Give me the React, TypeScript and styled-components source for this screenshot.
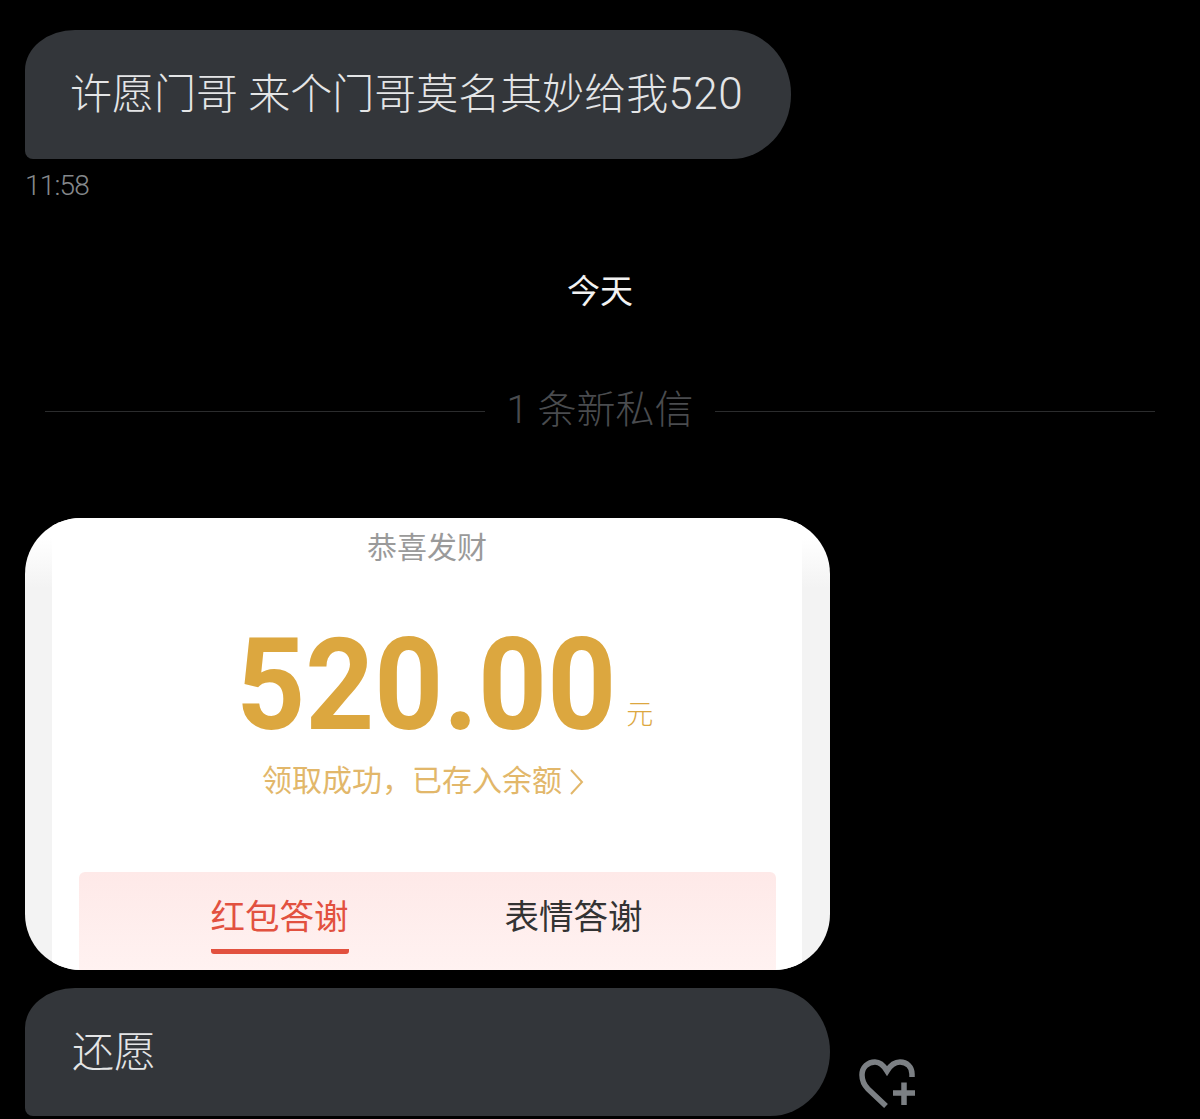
import styled, { createGlobalStyle } from 'styled-components';

const GlobalStyle = createGlobalStyle`
    html, body {
        margin: 0;
        padding: 0;
        background-color: #000;
    }
    body {
        font-family: Roboto, "Noto Sans CJK SC", sans-serif;
    }
`;

const Page = styled.div`
    width: 1200px;
    height: 1119px;
    box-sizing: border-box;
    padding: 30px 0 0 25px;
    overflow: hidden;
    background-color: #000;
`;

const Bubble = styled.div<{ $width: number; $height: number; $inset: number }>`
    width: ${(p) => p.$width}px;
    height: ${(p) => p.$height}px;
    box-sizing: border-box;
    padding: 0 ${(p) => p.$inset}px 8px;
    display: flex;
    align-items: center;
    background-color: #33363a;
    border-radius: 50px 60px 60px 8px / 40px 64px 64px 8px;
    color: #e4e5e6;
    font-size: 42px;
    font-weight: 300;
    white-space: pre;
`;

const Digits = styled.span`
    font-size: 44px;
    letter-spacing: 0.6px;
`;

const Time = styled.div`
    margin-top: 11px;
    height: 32px;
    line-height: 32px;
    font-size: 28px;
    font-weight: 300;
    letter-spacing: -0.8px;
    color: #85888b;
`;

const DateLabel = styled.div`
    margin: 70px 0 0 -25px;
    height: 40px;
    line-height: 40px;
    text-align: center;
    font-size: 33px;
    color: #f2f2f2;
`;

const Divider = styled.div`
    margin: 69px 0 0 20px;
    width: 1110px;
    height: 50px;
    display: flex;
    align-items: center;
    gap: 21px;
    color: #4a4c4f;
    font-size: 39px;
    font-weight: 300;
`;

const DividerLine = styled.div`
    flex: 1;
    height: 1px;
    margin-top: 10px;
    background-color: #2b2c2d;
`;

const ImageCard = styled.div`
    margin-top: 87px;
    width: 805px;
    height: 452px;
    box-sizing: border-box;
    padding: 0 28px 0 27px;
    background: linear-gradient(180deg, #fff 0, #fff 20px, #f3f3f3 70px);
    border-radius: 56px;
    overflow: hidden;
`;

const Receipt = styled.div`
    height: 100%;
    box-sizing: border-box;
    padding-top: 8px;
    display: flex;
    flex-direction: column;
    align-items: center;
    background-color: #fff;
`;

const Greeting = styled.div`
    height: 44px;
    line-height: 44px;
    font-size: 30px;
    color: #9a9a9a;
`;

const AmountRow = styled.div`
    margin-top: 55px;
    height: 120px;
    padding-left: 34px;
    display: flex;
    align-items: flex-end;
    gap: 9px;
    color: #dca73f;
`;

const Amount = styled.div`
    margin: 0 -11px;
    font-size: 128px;
    line-height: 120px;
    font-weight: 700;
    transform: scaleX(0.94);
`;

const Unit = styled.div`
    width: 27px;
    margin-bottom: 10px;
    font-size: 27px;
    line-height: 40px;
    font-weight: 300;
`;

const Status = styled.div`
    margin-top: 11px;
    height: 44px;
    padding-right: 8px;
    display: flex;
    align-items: center;
    gap: 7px;
    font-size: 30px;
    color: #e2b76a;
`;

const StatusArrow = styled.svg`
    margin-top: 8px;
`;

const TabPanel = styled.div`
    margin-top: 72px;
    width: 697px;
    height: 98px;
    box-sizing: border-box;
    padding-left: 132px;
    display: flex;
    gap: 156px;
    background: linear-gradient(180deg, #fee9e8 0%, #fff2f1 100%);
    border-radius: 6px 6px 0 0;
`;

const Tab = styled.div<{ $active?: boolean }>`
    height: 82px;
    box-sizing: border-box;
    padding-top: 20px;
    line-height: 50px;
    font-size: 34.5px;
    color: ${(p) => (p.$active ? '#e2513f' : '#333')};
    border-bottom: 5px solid ${(p) => (p.$active ? '#e2513f' : 'transparent')};
    border-radius: 0 0 3px 3px;
`;

const LastRow = styled.div`
    margin-top: 18px;
    display: flex;
    align-items: flex-end;
    gap: 27px;
`;

const HeartSvg = styled.svg`
    margin-bottom: 5px;
`;

const HeartIcon = () => (
    <HeartSvg width="60" height="56" viewBox="16 15 60 56" fill="none" stroke="#7c8084">
        <path
            d="M45 66 L27 49 C 22 44 21 39 21 35 C 21 27 27 22 34 22 C 39 22 43 26 46 31 C 49 26 53 22 59 22 C 66 22 71 27 71 34 L 71 37"
            strokeWidth="5.5"
        />
        <path d="M52 53 H74 M63 42.5 V65" strokeWidth="5.5" />
    </HeartSvg>
);

const App = () => {
    return (
        <Page>
            <GlobalStyle />
            <Bubble $width={766} $height={129} $inset={45}>
                <span>
                    许愿门哥 来个门哥莫名其妙给我<Digits>520</Digits>
                </span>
            </Bubble>
            <Time>11:58</Time>
            <DateLabel>今天</DateLabel>
            <Divider>
                <DividerLine />1 条新私信
                <DividerLine />
            </Divider>
            <ImageCard>
                <Receipt>
                    <Greeting>恭喜发财</Greeting>
                    <AmountRow>
                        <Amount>520.00</Amount>
                        <Unit>元</Unit>
                    </AmountRow>
                    <Status>
                        领取成功，已存入余额
                        <StatusArrow width="15" height="26" viewBox="0 0 15 26" fill="none" stroke="#e2b76a" strokeWidth="2">
                            <path d="M2 1 L13 13 L2 25" />
                        </StatusArrow>
                    </Status>
                    <TabPanel>
                        <Tab $active>红包答谢</Tab>
                        <Tab>表情答谢</Tab>
                    </TabPanel>
                </Receipt>
            </ImageCard>
            <LastRow>
                <Bubble $width={805} $height={128} $inset={47}>
                    还愿
                </Bubble>
                <HeartIcon />
            </LastRow>
        </Page>
    );
};

export default App;
